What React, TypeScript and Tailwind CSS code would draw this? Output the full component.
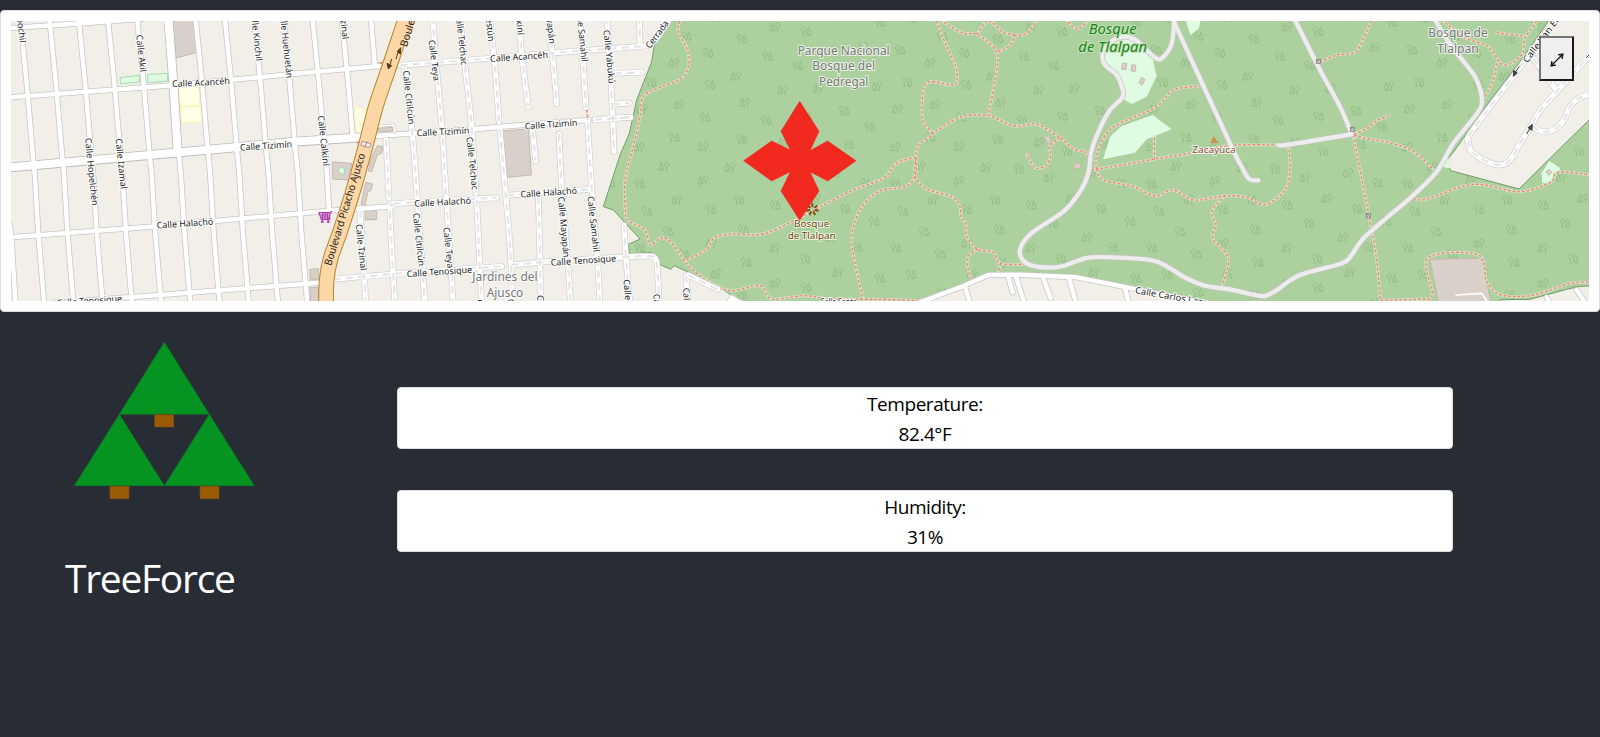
import React from "react";

/* Map geometry is kept in thirds of a pixel. Each entry starts with the x origin of its sheet. */
type Line = [number, string];

const nums = (o: number, s: string): number[][] =>
  s.trim().split(/\s+/).map((p) => {
    const [x, y] = p.split(",").map(Number);
    return [x + o, y];
  });

const straight = ([o, s]: Line) => "M" + nums(o, s).map((p) => p.join(" ")).join("L");

const smooth = ([o, s]: Line) => {
  const p = nums(o, s);
  let d = `M${p[0][0]} ${p[0][1]}`;
  for (let i = 0; i < p.length - 1; i++) {
    const a = p[i - 1] || p[i], b = p[i], c = p[i + 1], e = p[i + 2] || c;
    d += `C${b[0] + (c[0] - a[0]) / 6} ${b[1] + (c[1] - a[1]) / 6} ${c[0] - (e[0] - b[0]) / 6} ${c[1] - (e[1] - b[1]) / 6} ${c[0]} ${c[1]}`;
  }
  return d;
};

const A = 0, B = 900, C = 1770, D = 2640, E = 3450, F = 4110;

const avenues: Line[] = Array.from({ length: 13 }, (_, k): Line => {
  const full = ["60,50", "80,250", "98,460", "104,520", "115,700", "133,915"];
  const cut = k === 12 ? ["60,50", "72,195"] : k === 11 ? ["60,50", "80,250", "93,405"] : k === 10 ? [...full.slice(0, 4), "110,630"] : full;
  return [k * 87.7, cut.join(" ")];
});

const minor: Line[] = [
  ...avenues,
  [A, "30,675 34,715 47,915"],
  [A, "20,85 250,70 430,56"],
  [A, "20,293 520,256 900,220 1140,198"],
  [A, "20,713 480,678 990,632 1160,620"],
  [A, "160,908 480,885 960,848"],
  [B, "225,408 520,388 630,378 866,360"],
];
const wide: Line[] = [[A, "20,503 540,457 900,424 1085,412"], [A, "505,50 520,250 533,457"]];

const gated: Line[] = [
  [B, "300,196 510,180 745,160 1050,137"],
  [C, "180,136 205,108 243,50"],
  [B, "885,359 990,352"],
  [B, "285,915 270,640 278,617 300,610 590,593"],
  [B, "620,586 872,568"],
  [B, "100,838 360,815 605,799"],
  [B, "635,795 770,783 970,771 1040,768 1060,770 1069,782 1072,805 1078,915"],
  [B, "313,200 335,380 345,500 352,600 375,915"],
  [B, "397,50 412,230 425,375"], [B, "428,415 440,610 460,915"],
  [B, "480,50 495,200 515,380 528,580"], [B, "530,600 545,915"],
  [B, "568,50 585,200 597,365"], [B, "600,390 615,560 630,740 638,915"],
  [B, "655,50 667,180 685,320"], [B, "745,50 757,160 770,312"],
  [B, "840,50 850,200 858,323"], [B, "863,368 875,560 892,770 900,915"],
  [B, "920,50 930,200 938,350 942,455"], [B, "698,395 707,482"],
  [B, "777,402 785,560 800,740 812,915"], [B, "715,590 718,700 723,915"],
  [B, "258,420 267,595"], [B, "180,632 185,700 193,830 198,915"],
  [B, "972,676 980,800 990,915"],
  [C, "75,220 155,217"], [C, "68,312 118,309"], [C, "148,50 150,128"], [C, "60,354 122,352"],
  [C, "295,825 383,868"], [C, "288,828 296,915"],
  [F, "575,35 440,215 305,395 296,425 305,455 345,482 390,495 420,480 450,430 485,375 520,320 660,165"],
  [F, "488,378 508,392 530,396 560,384 585,355 598,322 625,295 665,281"],
  [F, "490,175 555,265"],
];

const park: Line[] = [
  [E, "70,50 75,72 240,430 275,500 298,537 325,541"],
  [D, "883,50 880,100 874,135 860,160 838,178 815,165 770,122 735,110 700,120 672,150 668,180 680,200 710,225 728,270 725,295 690,330 660,385 635,450 625,520 600,575 550,635 460,695 425,735 422,770 450,795 510,803 550,798 600,780 650,771 810,780 870,805 920,835 975,857 1050,868 1120,884 1155,888 1190,870 1260,825 1385,790 1415,765 1450,715 1530,645 1595,590 1670,515 1720,430 1795,335 1805,290 1785,230 1735,165 1695,110 1660,50"],
  [E, "430,50 505,200 570,320 604,400"],
  [E, "385,435 415,434 604,403"],
];

const southRoad: Line[] = [
  [C, "410,920 425,893 480,925"],
  [D, "60,930 130,903 250,858 325,825 420,824 590,832 740,862 1000,915"],
  [D, "255,860 272,915"], [D, "385,830 398,877"], [D, "408,830 435,915"], [D, "490,835 512,895"], [D, "568,838 590,915"], [D, "735,865 748,915"],
  [F, "530,892 542,915"], [F, "620,870 650,915"],
];

const trails: Line[] = [
  [C, "272,50 265,95 290,145 297,190 275,235 215,260 160,290 150,350 130,440 105,540 107,640 118,665 165,690 180,736 215,712 250,735 290,790 345,838 420,872 510,857 545,897 640,887 720,897 860,898 1000,902"],
  [C, "290,780 350,748 375,712 430,702 520,702 615,660 700,615 790,570 880,535 920,490 975,472"],
  [C, "977,475 978,520 950,558 865,575 810,630 785,710 795,790 818,892"],
  [D, "165,50 200,140 228,200 230,245 215,255 150,245 130,275 128,360 155,402 115,435 107,475 107,530 140,567 215,590 240,620 243,650 258,670 260,710 293,748 340,757 362,790 435,793"],
  [D, "155,402 240,352 325,347 400,378 470,373 540,413 580,447 615,455 625,470"],
  [D, "180,60 250,100 290,103 350,157 345,240 325,347"],
  [D, "290,103 325,63 370,98 402,107 385,140 350,157"], [D, "402,107 440,100 472,56"],
  [D, "555,56 590,87 622,65"],
  [D, "540,413 508,440 512,465 500,495 470,505 455,490 440,465"],
  [D, "293,748 262,775 272,835"], [D, "362,790 355,815"],
  [D, "650,507 650,465 680,400 720,370 830,320 880,270 960,258"],
  [D, "640,507 655,507 820,478 940,458 1055,436 1195,435"],
  [D, "823,478 823,410"],
  [D, "650,507 670,540 760,560 825,588 880,570 940,600 1040,587 1100,592 1155,614 1215,570 1230,510 1226,440"],
  [E, "225,587 185,635 198,675 188,715 235,775 217,855"],
  [E, "510,187 560,165 615,157 640,115 668,56"],
  [E, "612,403 650,385 680,362 716,347"],
  [E, "612,405 660,418 720,428 790,455 850,508"],
  [E, "610,405 640,560 665,690 680,780 692,900"],
  [F, "32,901 150,897 187,885 175,773 325,765 350,845 395,885 490,885 600,850 665,847"],
  [F, "130,595 170,597 310,553 447,575 540,548 565,517 665,525"],
  [F, "215,60 290,115 355,140 400,195 455,165 465,115 505,56"], [F, "380,98 460,108"],
  [F, "380,190 370,240 345,292"],
];

const buildings: Line[] = [
  [A, "516,50 588,50 590,157 528,174"],
  [B, "608,393 685,387 694,525 622,532"],
  [B, "97,486 155,490 148,540 98,537"], [B, "235,385 278,382 278,393 235,396"],
  [B, "232,437 248,440 245,460 232,464 215,515 205,513 212,480 220,462"],
  [B, "197,547 218,552 212,572 204,574 195,615 183,612"], [B, "196,632 230,632 230,658 196,660"],
  [B, "30,808 56,806 56,838 30,838"], [B, "30,862 56,862 56,915 32,915"],
  [D, "727,190 740,190 738,209 725,208"], [D, "756,194 768,196 765,215 753,213"], [D, "786,232 795,239 786,255 777,248"],
  [D, "490,408 508,408 513,422 503,435 497,420"], [D, "582,490 602,491 602,505 582,505"], [D, "446,458 455,458 454,464 446,464"],
  [F, "180,778 330,775 338,790 365,915 207,915"], [F, "528,515 537,508 546,517 537,526"],
];
const meadows: Line[] = [
  [D, "680,140 735,112 770,122 815,165 830,228 800,290 755,312 730,298 728,270 710,222 672,185"],
  [D, "725,378 818,345 875,388 800,418 765,458 669,478 690,410"],
  [D, "913,50 963,50 957,85 932,106"],
  [F, "515,520 538,483 570,505 550,545 517,550"], [F, "235,470 240,505 218,500"],
];
const lots: Line[] = [[A, "360,233 417,226 419,246 362,251"], [A, "443,224 502,220 503,243 444,248"], [B, "115,507 124,501 134,506 132,524 122,520 116,517"]];
const schools: Line[] = [[A, "536,262 597,258 598,316 542,320"], [A, "542,322 602,317 606,365 545,369"], [B, "162,318 205,332 188,398 168,398"]];
const forest: Line = [C, "245,50 192,140 185,185 140,300 118,400 90,465 40,620 70,630 150,717 115,733 118,762 185,757 212,795 242,808 252,797 370,850 470,915 3020,915 3020,50"];
const clearings: Line[] = [
  [D, "90,920 250,860 330,825 590,835 740,865 1000,918"],
  [F, "545,50 450,185 345,322 255,450 235,475 236,497 242,512 447,567 665,352 665,50"],
  [F, "370,915 395,899 480,898 590,868 630,859 665,858 665,915"],
];

/* Tree glyph positions inside one 768-unit repeat; 1 = conifer first. */
const trees: [number, number, number][] = [
  [555,82,1],[648,95,0],[288,110,0],[455,117,0],[355,160,0],[533,170,0],[252,188,1],[623,197,0],[438,230,1],[819,143,1],[930,150,0],
  [951,248,0],[360,255,0],[578,271,1],[685,265,1],[860,260,1],[267,315,1],[465,308,1],[762,332,0],[923,328,1],[345,353,0],[528,362,0],
  [650,350,0],[839,380,0],[252,413,0],[455,419,0],[580,427,1],[776,434,0],[915,443,1],[339,440,1],[663,455,0],[222,500,1],[420,503,1],
  [519,508,0],[738,520,1],[609,533,1],[339,542,1],[827,550,0],[917,552,0],[261,600,1],[447,600,0],[675,596,1],[555,617,0],[363,628,0],
  [765,627,0],[939,635,0],[852,665,0],[621,670,0],[234,695,0],[459,690,0],[723,713,1],[363,730,1],[801,743,0],[555,745,1],[918,745,0],
  [282,763,0],[645,776,0],[468,788,0],[743,818,1],[378,822,1],[870,836,0],[963,824,0],
];

/* x, y (centre), text, rotation, length, size */
type Label = [number, number, string, number, number, number?];
const streets: Label[] = [
  [A + 603, 247, "Calle Acancéh", -3, 174], [A + 798, 437, "Calle Tizimín", -4, 156], [A + 555, 670, "Calle Halachó", -4, 170],
  [A + 268, 902, "Calle Tenosique", -4, 196], [A + 64, 82, "Xbochil", 84, 92], [A + 424, 160, "Calle Akil", 84, 112],
  [A + 770, 106, "Calle Kinchil", 84, 155], [A + 859, 133, "Calle Huehuetán", 84, 203], [A + 275, 515, "Calle Hopelchén", 84, 203],
  [A + 364, 491, "Calle Izamal", 84, 152], [A + 971, 422, "Calle Calkiní", 84, 152],
  [B + 657, 170, "Calle Acancéh", -4, 174], [B + 429, 395, "Calle Tizimín", -3, 158], [B + 753, 373, "Calle Tizimín", -4, 158],
  [B + 428, 606, "Calle Halachó", -3, 170], [B + 746, 577, "Calle Halachó", -4, 170], [B + 418, 815, "Calle Tenosique", -4, 196],
  [B + 850, 781, "Calle Tenosique", -4, 196], [B + 130, 48, "Calle Tzinal", 84, 140], [B + 327, 292, "Calle Citilcún", 84, 162],
  [B + 403, 181, "Calle Teya", 83, 124], [B + 485, 118, "Calle Telchac", 84, 155], [B + 569, 70, "Celestún", 84, 108], [B + 655, 29, "Calle Calkiní", 84, 152],
  [B + 748, 40, "Calle Mayapán", 84, 182], [B + 846, 103, "Calle Samahil", 84, 165], [B + 928, 170, "Calle Yabukú", 84, 162],
  [B + 517, 490, "Calle Telchac", 84, 160], [B + 357, 718, "Calle Citilcún", 84, 160], [B + 446, 743, "Calle Teya", 84, 124],
  [B + 184, 742, "Calle Tzinal", 84, 140], [B + 792, 681, "Calle Mayapán", 85, 182], [B + 881, 672, "Calle Samahil", 84, 168],
  [B + 986, 916, "Calle Yobaín", 86, 156], [C + 205, 960, "Calle Yaxcabá", 86, 156], [C + 293, 926, "Calle Maní", 86, 126],
  [B + 545, 978, "Calle Telchac", 86, 160], [B + 638, 978, "Calle Celestún", 86, 162], [B + 726, 965, "Calle Calkiní", 86, 160],
  [C + 201, 103, "Cerrada", -53, 96], [C + 745, 906, "Calle Santa", 0, 110], [D + 875, 889, "Calle Carlos Lazo", 10, 222],
  [F + 524, 105, "Calle Van Enck", -53, 200],
];
const places: [number, number, string, number, number, string][] = [
  [B + 615, 830, "Jardines del", 196, 37, "#777"], [B + 615, 877, "Ajusco", 110, 37, "#777"],
  [C + 761, 152, "Parque Nacional", 276, 37, "#777"], [C + 761, 198, "Bosque del", 188, 37, "#777"], [C + 761, 245, "Pedregal", 148, 37, "#777"],
  [F + 264, 99, "Bosque de", 178, 37, "#777"], [F + 264, 146, "Tlalpan", 124, 37, "#777"],
  [C + 665, 672, "Bosque", 106, 29, "#734a08"], [C + 665, 708, "de Tlalpan", 144, 29, "#734a08"], [E + 192, 449, "Zacayuca", 130, 29, "#85503a"],
];

const Strokes = ({ lines, color, width, dash, curve, cap = "round" }: { lines: Line[]; color: string; width: number; dash?: string; curve?: boolean; cap?: "round" | "butt" }) => (
  <g fill="none" stroke={color} strokeWidth={width} strokeLinecap={cap} strokeLinejoin="round" strokeDasharray={dash}>
    {lines.map((l, i) => <path key={i} d={curve ? smooth(l) : straight(l)} />)}
  </g>
);
const Areas = ({ areas, fill, stroke }: { areas: Line[]; fill: string; stroke?: string }) => (
  <g fill={fill} stroke={stroke} strokeWidth={3}>
    {areas.map((a, i) => <path key={i} d={straight(a) + "Z"} />)}
  </g>
);

const boulevard: Line[] = [[B, "320,45 268,200 228,318 199,430 163,560 122,690 92,775 80,840 78,915"]];

function Woods() {
  const marks: React.ReactNode[] = [];
  trees.forEach(([tx, ty, flip], i) => {
    for (let col = 0; col < 5; col++) {
      for (let row = -1; row < 2; row++) {
        const x = C + tx + (col - 1) * 768;
        const y = ty + row * 768;
        if (x > 1790 && x < 4790 && y > 40 && y < 925)
          marks.push(<path key={`${i}.${col}.${row}`} transform={`translate(${x} ${y})${flip ? " scale(-1 1)" : ""}`} d="M-8 15V1M-8 1C-17 1 -15 -14 -8 -14C-1 -14 1 1 -8 1M8 15V9M8 -13L3 -1H5L0 9H16L11 -1H13Z" />);
      }
    }
  });
  return <g clipPath="url(#forest)" fill="none" stroke="#8db782" strokeWidth={2.2}>{marks}</g>;
}

function TreeMap() {
  return (
    <svg className="block h-[280px] w-[1578px]" viewBox="33 63 4734 840" fontFamily="'Noto Sans', sans-serif">
      <defs>
        <clipPath id="forest"><path d={straight(forest) + "Z"} /></clipPath>
      </defs>
      <rect x={33} y={63} width={4734} height={840} fill="#f2efe9" />
      <Areas areas={[forest]} fill="#add19e" stroke="#73a06c" />
      <Woods />
      <Areas areas={meadows} fill="#dffce2" />
      <Areas areas={clearings} fill="#f2efe9" stroke="#6b9a66" />
      <Areas areas={meadows.slice(3)} fill="#dffce2" />
      <Areas areas={schools} fill="#ffffe5" stroke="#fbf6b0" />
      <Areas areas={buildings} fill="#d9d0c9" stroke="#c6b8ac" />
      <Areas areas={lots} fill="#dffce2" stroke="#a5dcae" />

      <Strokes lines={trails} color="#d3dfc2" width={9} curve />
      <g opacity={0.85}><Strokes lines={trails} color="#fa7264" width={4} dash="8 6" cap="butt" curve /></g>

      <Strokes lines={wide} color="#bbb" width={29} />
      <Strokes lines={[...minor, ...southRoad]} color="#c6c6c6" width={18} />
      <Strokes lines={gated} color="#cfcfcf" width={19} curve />
      <Strokes lines={park} color="#c9c5c8" width={17} curve />
      <Strokes lines={wide} color="#fff" width={24} />
      <Strokes lines={[...minor, ...southRoad]} color="#fff" width={13.5} />
      <Strokes lines={gated} color="#fff" width={15} curve />
      <Strokes lines={gated} color="#e6e6e6" width={7} dash="22 15" cap="butt" curve />
      <Strokes lines={park} color="#ededed" width={12.5} curve />
      <Strokes lines={[[B, "222,379 281,375 284,398"]]} color="#c6c6c6" width={8} />
      <Strokes lines={[[B, "222,379 281,375 284,398"], [F, "258,885 335,880 352,905"]]} color="#fff" width={5} />

      <Strokes lines={[[B, "240,188 262,190 246,212"]]} color="#b8852a" width={4} />
      <Strokes lines={boulevard} color="#b4832a" width={47} curve />
      <Strokes lines={boulevard} color="#fcd6a4" width={41} curve />
      <g transform={`translate(${B} 0)`}>
        <path d="M187 424L213 431L208 443L183 436Z" fill="#f3f3f3" stroke="#777" strokeWidth={2} />
        <path d="M201 425L194 442" stroke="#e66" strokeWidth={3} />
        <path d="M170 427L182 429M860 330L864 358" stroke="#fa7264" strokeWidth={4} strokeDasharray="8 5" />
        <g fill="#5b3a10" stroke="#5b3a10" strokeWidth={3}>
          <path d="M288 177L297 148" /><path d="M292 155L302 143L301 162Z" />
          <path d="M275 177L267 203" /><path d="M261 190L265 207L275 197Z" />
        </g>
        <g stroke="#ac39ac" fill="none" strokeWidth={3.6}>
          <path d="M57 638L90 637L88 658H64ZM59 645H90M61 651H89M68 639V658M75 638V658M82 638V658M90 637L97 635M64 658L92 656" />
          <circle cx={67} cy={665} r={2.5} /><circle cx={85} cy={665} r={2.5} />
        </g>
      </g>

      {[[E + 505, 184], [E + 607, 388], [E + 655, 646]].map(([x, y]) => (
        <g key={x} stroke="#777" strokeWidth={2.5}>
          <rect x={x - 6} y={y - 6} width={12} height={12} fill="#eee" />
          <path d={`M${x - 4} ${y - 4}l8 8m0 -8l-8 8`} />
        </g>
      ))}
      <path d={`M${E + 192} 408l12 21h-24Z`} fill="#d08f55" />
      <g stroke="#444" fill="#444" strokeWidth={3}>
        <path d={`M${F + 448} 199L${F + 434} 220`} /><path d={`M${F + 430} 229l1 -18l11 8Z`} />
        <path d={`M${F + 470} 402L${F + 482} 382`} /><path d={`M${F + 487} 373l-1 18l-12 -8Z`} />
        <path d={`M${F + 648} 174l10 -10`} />
      </g>
      <g stroke="#734a08" strokeWidth={5.5} transform={`translate(${C + 667} 628)`}>
        {[0, 52, 103, 154, 206, 257, 308].map((a) => <path key={a} d="M0 -7V-19" transform={`rotate(${a})`} />)}
      </g>

      <g stroke="#fff" strokeWidth={6} strokeLinejoin="round" paintOrder="stroke" textAnchor="middle">
        {places.map(([x, y, t, len, size, fill], i) => (
          <text key={i} x={x} y={y + size * 0.36} fontSize={size} textLength={len} lengthAdjust="spacingAndGlyphs" fill={fill} strokeOpacity={0.75}>{t}</text>
        ))}
        <g fill="#158415" fontStyle="italic" fontSize={43} fontWeight={400} stroke="#c6e2bb">
          <text x={D + 698} y={103} textLength={144} lengthAdjust="spacingAndGlyphs">Bosque</text>
          <text x={D + 698} y={157} textLength={206} lengthAdjust="spacingAndGlyphs">de Tlalpan</text>
        </g>
        {streets.map(([x, y, t, rot, len, size = 27], i) => (
          <text key={i} transform={`translate(${x} ${y}) rotate(${rot})`} y={size * 0.36} fontSize={size} textLength={len} lengthAdjust="spacingAndGlyphs" fill="#222">{t}</text>
        ))}
        <g stroke="#fcd6a4" strokeWidth={4} fill="#222" fontSize={31}>
          <text transform={`translate(${B + 134} 628) rotate(-73)`} y={11} textLength={350} lengthAdjust="spacingAndGlyphs">Boulevard Picacho Ajusco</text>
          <text transform={`translate(${B + 310} 139) rotate(-73)`} y={11} textAnchor="start">Boulevard Picacho</text>
        </g>
      </g>

      <path
        d={straight([C, "629,304 687,394 660,452 713,423 798,482 713,543 660,515 687,573 629,661 573,573 601,515 545,543 461,482 545,423 601,450 573,394"]) + "Z"}
        fill="#f61a14" fillOpacity={0.92} stroke="#fb1812" strokeWidth={1.5}
      />
    </svg>
  );
}

function Logo() {
  return (
    <svg className="block h-[158px] w-[182px]" viewBox="104 65 546 474">
      <path d="M375 66L510 282H240ZM240 282L375 496H105ZM510 282L645 496H375Z" fill="#059422" stroke="#0d7f25" strokeWidth={1.5} />
      <path d="M346 283H403V320H346ZM212 498H269V535H212ZM482 498H539V535H482Z" fill="#9b5b04" stroke="#7d4f14" strokeWidth={2} />
    </svg>
  );
}

function Reading({ label, value }: { label: string; value: string }) {
  return (
    <div className="flex h-[62px] flex-col items-center rounded border border-[#dfdfdf] bg-white pt-px text-[19px] leading-[30px] tracking-[-0.45px] text-black">
      <span>{label}</span>
      <span>{value}</span>
    </div>
  );
}

export default function App() {
  return (
    <div className="h-[737px] w-[1600px] overflow-hidden bg-[#282c34] pt-[10px] font-['Open_Sans','Noto_Sans',sans-serif]">
      <div className="relative h-[302px] rounded border border-[#dfdfdf] bg-white p-[10px]">
        <TreeMap />
        <button className="absolute top-[25px] right-[25px] flex h-[45px] w-[35px] items-center justify-center border-2 border-t-[#767676] border-r-[#18181c] border-b-[#18181c] border-l-[#767676] bg-[#efefef]" aria-label="Expand">
          <svg className="mt-0.5 h-[14px] w-[14px]" viewBox="0 0 14 14" fill="#8a8a8a" stroke="none">
            <path d="M13 1L12.2 6L8 1.8ZM1 13L1.8 8L6 12.2Z" />
            <path d="M2 12L12 2M8 1.8L13 1L12.2 6M1.8 8L1 13L6 12.2" fill="none" stroke="#111" strokeWidth="1.1" />
          </svg>
        </button>
      </div>
      <div className="flex pt-[30px]">
        <div className="w-[397px] shrink-0 pl-[65px]">
          <div className="pl-[9px]"><Logo /></div>
          <h1 className="mt-[54px] text-[39px] leading-[48px] tracking-[-1.3px] text-white">TreeForce</h1>
        </div>
        <div className="w-[1056px] pt-[45px]">
          <Reading label="Temperature:" value="82.4°F" />
          <hr className="my-5 border-t border-[#24282f]" />
          <Reading label="Humidity:" value="31%" />
        </div>
      </div>
    </div>
  );
}
